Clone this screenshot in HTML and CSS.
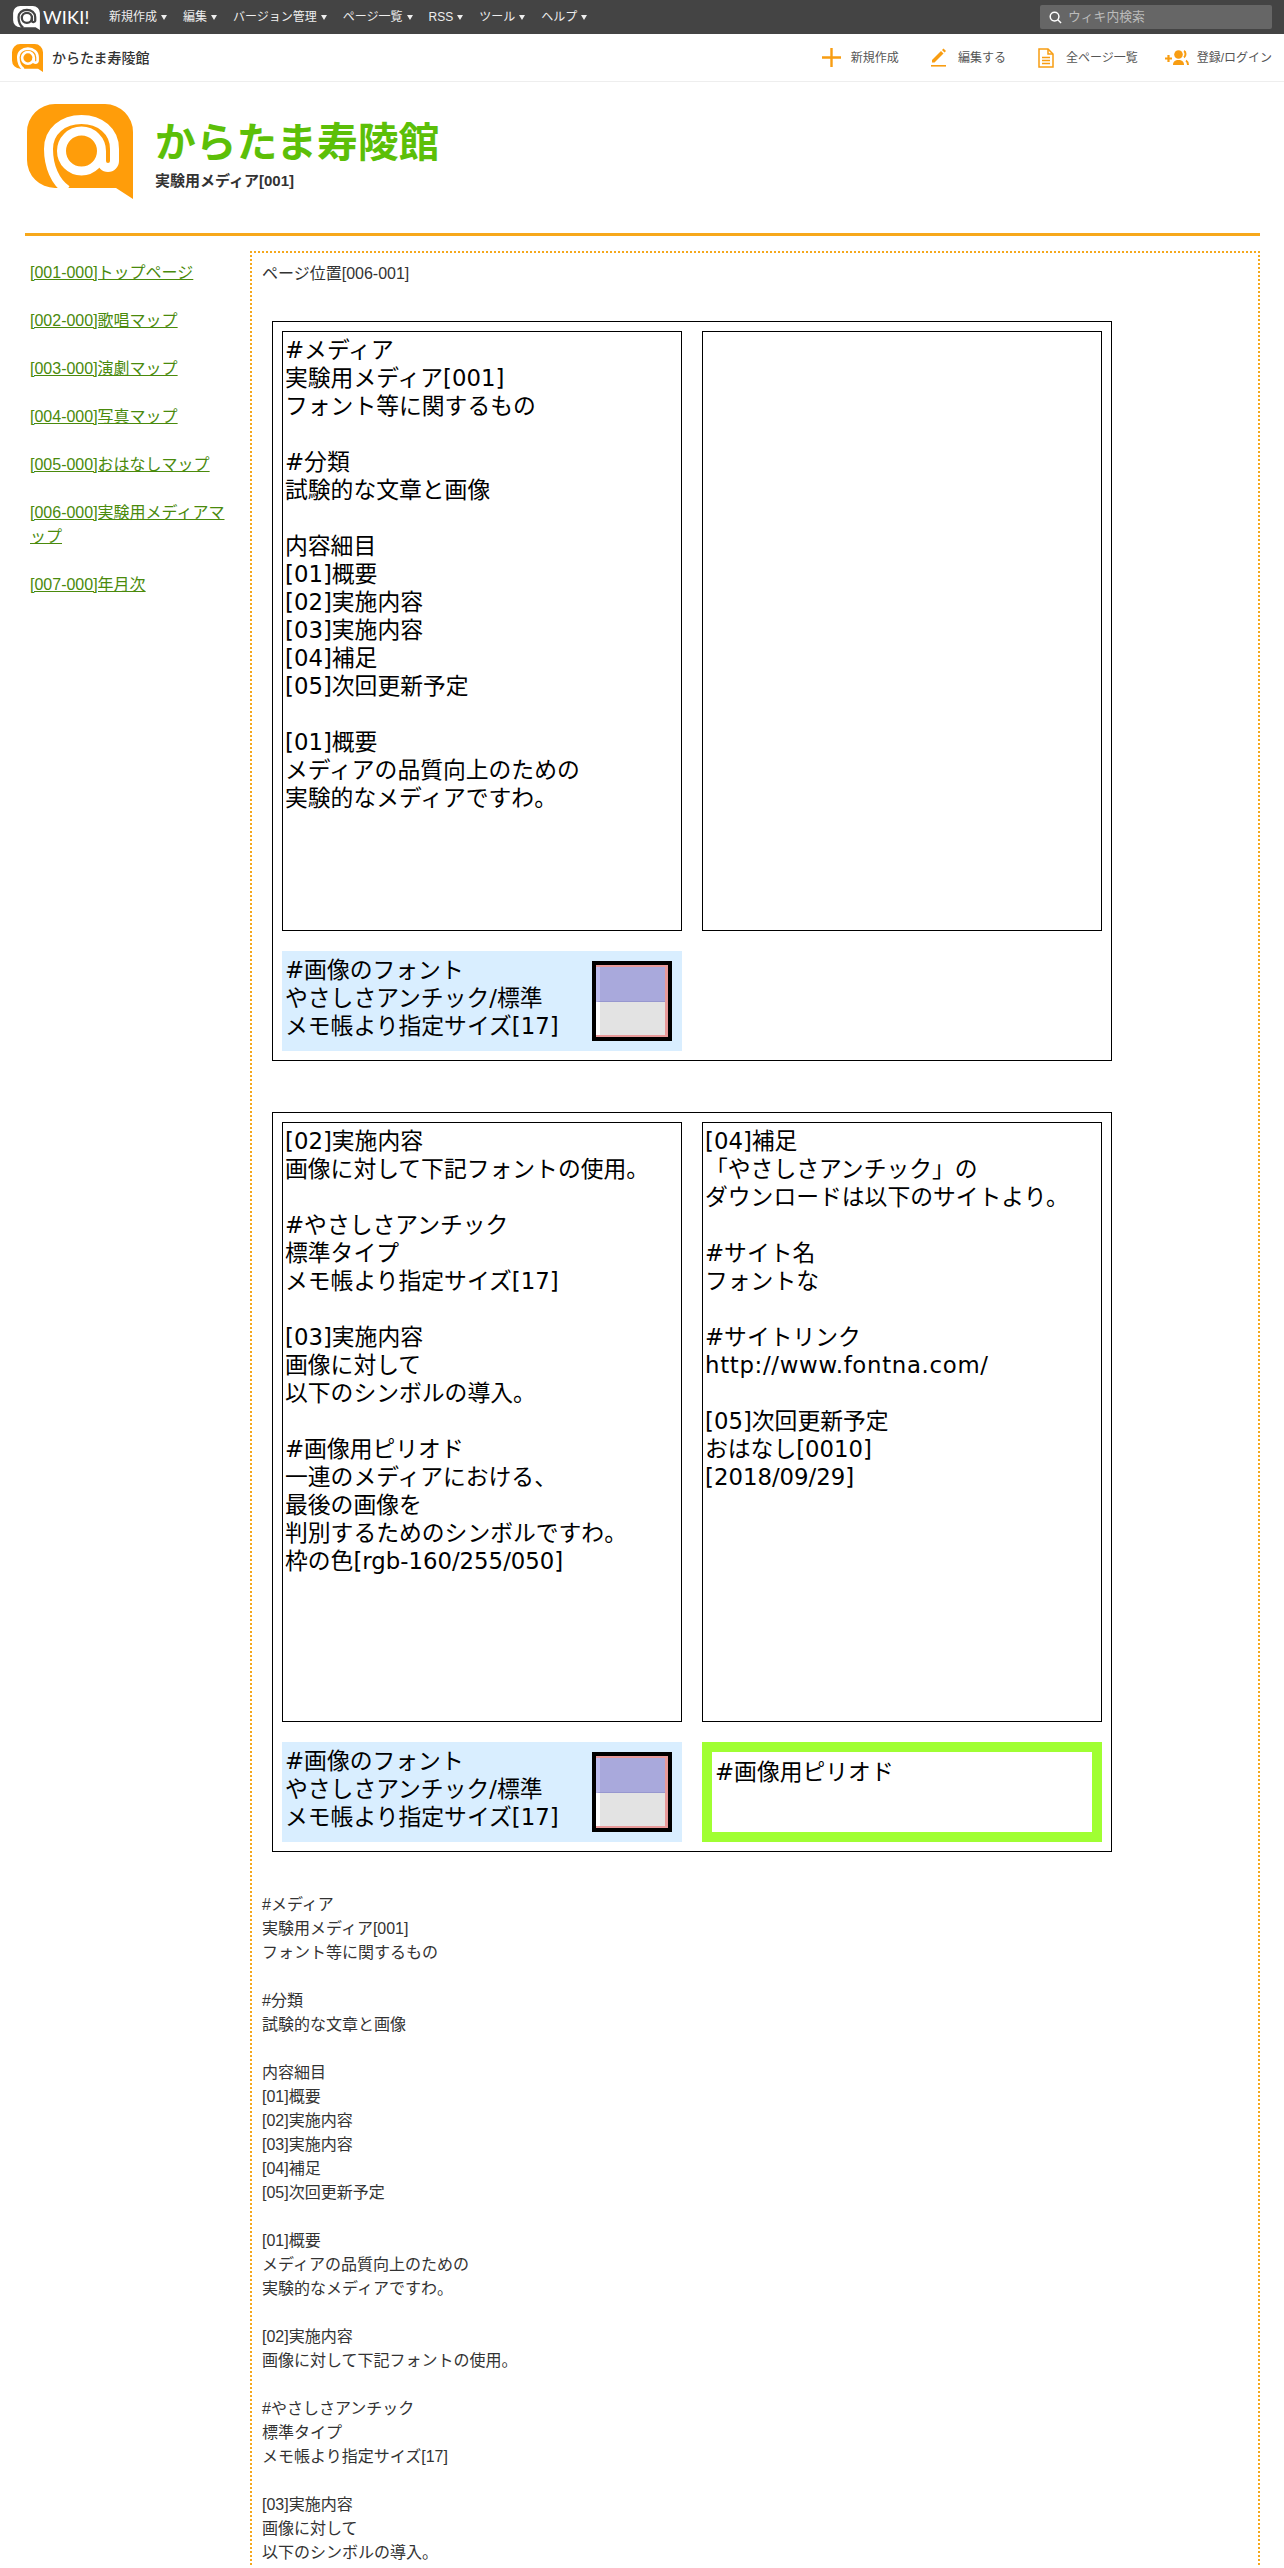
FILE: index.html
```html
<!DOCTYPE html>
<html lang="ja">
<head>
<meta charset="utf-8">
<title>からたま寿陵館</title>
<link rel="stylesheet" href="styles.css">
</head>
<body>
<header class="topbar">
  <a class="brand">
    <svg class="brand-mark" viewBox="0 0 106 95" aria-hidden="true">
      <path class="bubble-white" d="M28 0H78A28 28 0 0 1 106 28V95L89 84H28A28 28 0 0 1 0 56V28A28 28 0 0 1 28 0Z"/>
      <path class="at-dark" d="M40 86C28 78 21.5 62 21.5 45C21.5 27 36 15.5 54.5 15.5C73 15.5 87.5 27 87.5 45V57A6.500 6.500 0 0 1 74.5 57V47"/>
      <circle class="at-dark" cx="54.500" cy="47" r="20"/>
    </svg>
    <span class="brand-name">WIKI!</span>
  </a>
  <nav class="topnav">
    <a class="topnav-item">新規作成</a>
    <a class="topnav-item">編集</a>
    <a class="topnav-item">バージョン管理</a>
    <a class="topnav-item">ページ一覧</a>
    <a class="topnav-item">RSS</a>
    <a class="topnav-item">ツール</a>
    <a class="topnav-item">ヘルプ</a>
  </nav>
  <div class="search">
    <svg class="search-icon" viewBox="0 0 14 14" aria-hidden="true"><circle cx="6" cy="6" r="4.700"/><path d="M9.500 9.500L13 13"/></svg>
    <span class="search-text">ウィキ内検索</span>
  </div>
</header>

<div class="subbar">
  <a class="sub-brand">
    <svg class="sub-logo" viewBox="0 0 106 95" aria-hidden="true">
      <path class="bubble" d="M28 0H78A28 28 0 0 1 106 28V95L89 84H28A28 28 0 0 1 0 56V28A28 28 0 0 1 28 0Z"/>
      <path class="at" d="M40 86C28 78 21.5 62 21.5 45C21.5 27 36 15.5 54.5 15.5C73 15.5 87.5 27 87.5 45V57A6.500 6.500 0 0 1 74.5 57V47"/>
      <circle class="at" cx="54.500" cy="47" r="20"/>
    </svg>
    <span>からたま寿陵館</span>
  </a>
  <nav class="actions">
    <a class="action action-new">
      <svg class="ico ico-plus" viewBox="0 0 19 19" aria-hidden="true"><path d="M9.500 0V19M0 9.500H19"/></svg>
      <span>新規作成</span>
    </a>
    <a class="action action-edit">
      <svg class="ico ico-pen" viewBox="0 0 15 19" aria-hidden="true"><path class="fill" d="M1 12L10 3L12.500 5.500L3.500 14.500H1Z"/><path class="fill" d="M11 2L12.500 0.500L15 3L13.500 4.500Z"/><path d="M0 17.800H15"/></svg>
      <span>編集する</span>
    </a>
    <a class="action action-list">
      <svg class="ico ico-doc" viewBox="0 0 16 20" aria-hidden="true"><path d="M1 1H10L15 6V19H1Z"/><path d="M10 1V6H15M4 9.500H12M4 12.500H12M4 15.500H12"/></svg>
      <span>全ページ一覧</span>
    </a>
    <a class="action action-login">
      <svg class="ico ico-users" viewBox="0 0 24 15" aria-hidden="true"><path class="thick" d="M0 8.500H7M3.500 5V12"/><circle class="fill" cx="13.500" cy="4.500" r="4.300"/><path class="fill" d="M8 15C8 11.500 10 10 13.500 10S19 11.500 19 15Z"/><path class="thick-thin" d="M19 1C21 2 21 6 19 7.500M21 10.500C22.500 11.500 23 13 23 15"/></svg>
      <span>登録/ログイン</span>
    </a>
  </nav>
</div>

<div class="page">
  <div class="site-head">
    <svg class="site-logo" viewBox="0 0 106 95" aria-hidden="true">
      <path class="bubble" d="M28 0H78A28 28 0 0 1 106 28V95L89 84H28A28 28 0 0 1 0 56V28A28 28 0 0 1 28 0Z"/>
      <path class="at" d="M40 86C28 78 21.5 62 21.5 45C21.5 27 36 15.5 54.5 15.5C73 15.5 87.5 27 87.5 45V57A6.500 6.500 0 0 1 74.5 57V47"/>
      <circle class="at" cx="54.500" cy="47" r="20"/>
    </svg>
    <div class="site-titles">
      <h1 class="site-title">からたま寿陵館</h1>
      <p class="site-sub">実験用メディア[001]</p>
    </div>
  </div>

  <div class="columns">
    <aside class="sidebar">
      <a class="side-link">[001-000]トップページ</a>
      <a class="side-link">[002-000]歌唱マップ</a>
      <a class="side-link">[003-000]演劇マップ</a>
      <a class="side-link">[004-000]写真マップ</a>
      <a class="side-link">[005-000]おはなしマップ</a>
      <a class="side-link">[006-000]実験用メディアマップ</a>
      <a class="side-link">[007-000]年月次</a>
    </aside>

    <main class="main">
      <p class="location">ページ位置[006-001]</p>

      <section class="sheet sheet-first">
        <div class="panel">#メディア
実験用メディア[001]
フォント等に関するもの

#分類
試験的な文章と画像

内容細目
[01]概要
[02]実施内容
[03]実施内容
[04]補足
[05]次回更新予定

[01]概要
メディアの品質向上のための
実験的なメディアですわ。</div>
        <div class="panel"></div>
        <div class="caption">
          <div class="caption-text">#画像のフォント
やさしさアンチック/標準
メモ帳より指定サイズ[17]</div>
          <div class="thumb"><div class="thumb-top"></div><div class="thumb-bottom"></div></div>
        </div>
      </section>

      <section class="sheet sheet-second">
        <div class="panel">[02]実施内容
画像に対して下記フォントの使用。

#やさしさアンチック
標準タイプ
メモ帳より指定サイズ[17]

[03]実施内容
画像に対して
以下のシンボルの導入。

#画像用ピリオド
一連のメディアにおける、
最後の画像を
判別するためのシンボルですわ。
枠の色[rgb-160/255/050]</div>
        <div class="panel">[04]補足
「やさしさアンチック」の
ダウンロードは以下のサイトより。

#サイト名
フォントな

#サイトリンク
<span class="url">http://www.fontna.com/</span>

[05]次回更新予定
おはなし[0010]
[2018/09/29]</div>
        <div class="caption">
          <div class="caption-text">#画像のフォント
やさしさアンチック/標準
メモ帳より指定サイズ[17]</div>
          <div class="thumb"><div class="thumb-top"></div><div class="thumb-bottom"></div></div>
        </div>
        <div class="period">#画像用ピリオド</div>
      </section>

      <div class="body-text">#メディア
実験用メディア[001]
フォント等に関するもの

#分類
試験的な文章と画像

内容細目
[01]概要
[02]実施内容
[03]実施内容
[04]補足
[05]次回更新予定

[01]概要
メディアの品質向上のための
実験的なメディアですわ。

[02]実施内容
画像に対して下記フォントの使用。

#やさしさアンチック
標準タイプ
メモ帳より指定サイズ[17]

[03]実施内容
画像に対して
以下のシンボルの導入。</div>
    </main>
  </div>
</div>
</body>
</html>
```
FILE: styles.css
```css
* { box-sizing: border-box; }
html, body { margin: 0; padding: 0; }
body {
  height: 2568px;
  overflow: hidden;
  background: #fff;
  color: #333;
  font-family: "Liberation Sans", "Noto Sans CJK JP", sans-serif;
  font-size: 16px;
  line-height: 24px;
}
a { color: inherit; text-decoration: none; }

.topbar {
  display: flex;
  align-items: center;
  height: 34px;
  padding: 0 12px 0 13px;
  background: #444;
  color: #eee;
}
.brand { display: flex; align-items: center; width: 96px; flex: none; }
.brand-mark { width: 27px; height: 24px; flex: none; margin-top: 1px; }
.bubble-white { fill: #fff; }
.at-dark { fill: none; stroke: #444; stroke-width: 9; }
.brand-name {
  margin-left: 3px;
  font-family: "Lato", "Liberation Sans", sans-serif;
  font-size: 18px;
  line-height: 24px;
  letter-spacing: 0.2px;
  color: #fff;
}
.topnav { display: flex; flex: 1; font-size: 12px; line-height: 16px; }
.topnav-item { display: flex; align-items: center; margin-right: 16px; }
.topnav-item::after {
  content: "";
  margin-left: 4px;
  border-top: 5px solid #eee;
  border-left: 3px solid transparent;
  border-right: 3px solid transparent;
}
.search {
  display: flex;
  align-items: center;
  width: 232px;
  height: 24px;
  padding-left: 9px;
  background: #666;
  border-radius: 2px;
}
.search-icon { width: 13px; height: 13px; fill: none; stroke: #fff; stroke-width: 1.6; }
.search-text { margin-left: 6px; font-size: 12.8px; color: #bbb; }

.subbar {
  display: flex;
  align-items: center;
  justify-content: space-between;
  height: 48px;
  padding: 0 12px 0 12px;
  border-bottom: 1px solid #eee;
}
.sub-brand { display: flex; align-items: center; font-size: 14px; font-weight: 500; color: #333; }
.sub-logo { width: 31px; height: 28px; margin-right: 9px; }
.bubble { fill: #ff9d0a; }
.at { fill: none; stroke: #fff; stroke-width: 9; }
.actions { display: flex; align-items: center; font-size: 12px; color: #555; }
.action { display: flex; align-items: center; }
.action-new { margin-right: 32px; }
.action-edit { margin-right: 32px; }
.action-list { margin-right: 27px; }
.ico { flex: none; fill: none; stroke: #f89d12; }
.ico .fill { fill: #f89d12; stroke: none; }
.ico-plus { width: 19px; height: 19px; margin-right: 10px; stroke-width: 2.4; }
.ico-pen { width: 15px; height: 19px; margin-right: 12px; stroke-width: 1.6; }
.ico-doc { width: 16px; height: 20px; margin-right: 12px; stroke-width: 1.5; }
.ico-users { width: 24px; height: 15px; margin-right: 8px; }
.ico-users .thick { stroke-width: 2.2; }
.ico-users .thick-thin { stroke-width: 2; }

.page { margin: 0 25px; width: 1235px; }
.site-head {
  display: flex;
  align-items: flex-start;
  height: 154px;
  padding: 22px 0 0 2px;
  border-bottom: 3px solid #f7a81b;
}
.site-logo { width: 106px; height: 95px; flex: none; }
.site-titles { margin-left: 22px; padding-top: 11px; }
.site-title {
  margin: 0;
  font-size: 40.8px;
  line-height: 56px;
  font-weight: 700;
  color: #5cbf08;
}
.site-sub { margin: 0; font-size: 15px; line-height: 20px; font-weight: 700; color: #333; }

.columns { display: flex; align-items: flex-start; padding-top: 15px; }
.sidebar {
  display: flex;
  flex-direction: column;
  align-items: flex-start;
  gap: 24px;
  width: 225px;
  flex: none;
  padding: 10px 15px 0 5px;
}
.side-link { color: #4a8a0c; text-decoration: underline; }
.main {
  width: 1010px;
  flex: none;
  padding: 9px 10px 0;
  border: 2px dotted #f5a81c;
  border-bottom: 0;
}
.location { margin: 0; }

.sheet {
  display: grid;
  grid-template-columns: 400px 400px;
  grid-template-rows: 600px 100px;
  gap: 20px;
  width: 840px;
  height: 740px;
  margin-left: 10px;
  padding: 9px;
  border: 1px solid #000;
  color: #000;
  font-family: "DejaVu Sans", "Noto Sans CJK JP", sans-serif;
  font-size: 22.8px;
  line-height: 28px;
}
.sheet-first { margin-top: 35px; }
.sheet-second { margin-top: 51px; }
.panel {
  padding: 4px 2px;
  border: 1px solid #000;
  white-space: pre-line;
}
.url { letter-spacing: 0.7px; }
.caption {
  display: flex;
  justify-content: space-between;
  padding: 5px 10px 0 3px;
  background: #d9eeff;
}
.caption-text { white-space: pre-line; }
.thumb {
  display: flex;
  flex-direction: column;
  width: 80px;
  height: 80px;
  margin-top: 5px;
  flex: none;
  border: 4px solid #000;
  background: #e89a9a;
  padding: 2px 3px 2px 0;
}
.thumb-top {
  flex: 1;
  background: #a9a9dc;
  border-left: 4px solid #bcbcee;
  border-bottom: 1px solid #9797cf;
}
.thumb-bottom {
  flex: 1;
  background: #e3e3e3;
  border-left: 4px solid #fff;
}
.period {
  padding: 6px 3px;
  border: 10px solid #a0ff32;
  background: #fff;
}
.body-text {
  margin-top: 41px;
  white-space: pre-line;
}
```
